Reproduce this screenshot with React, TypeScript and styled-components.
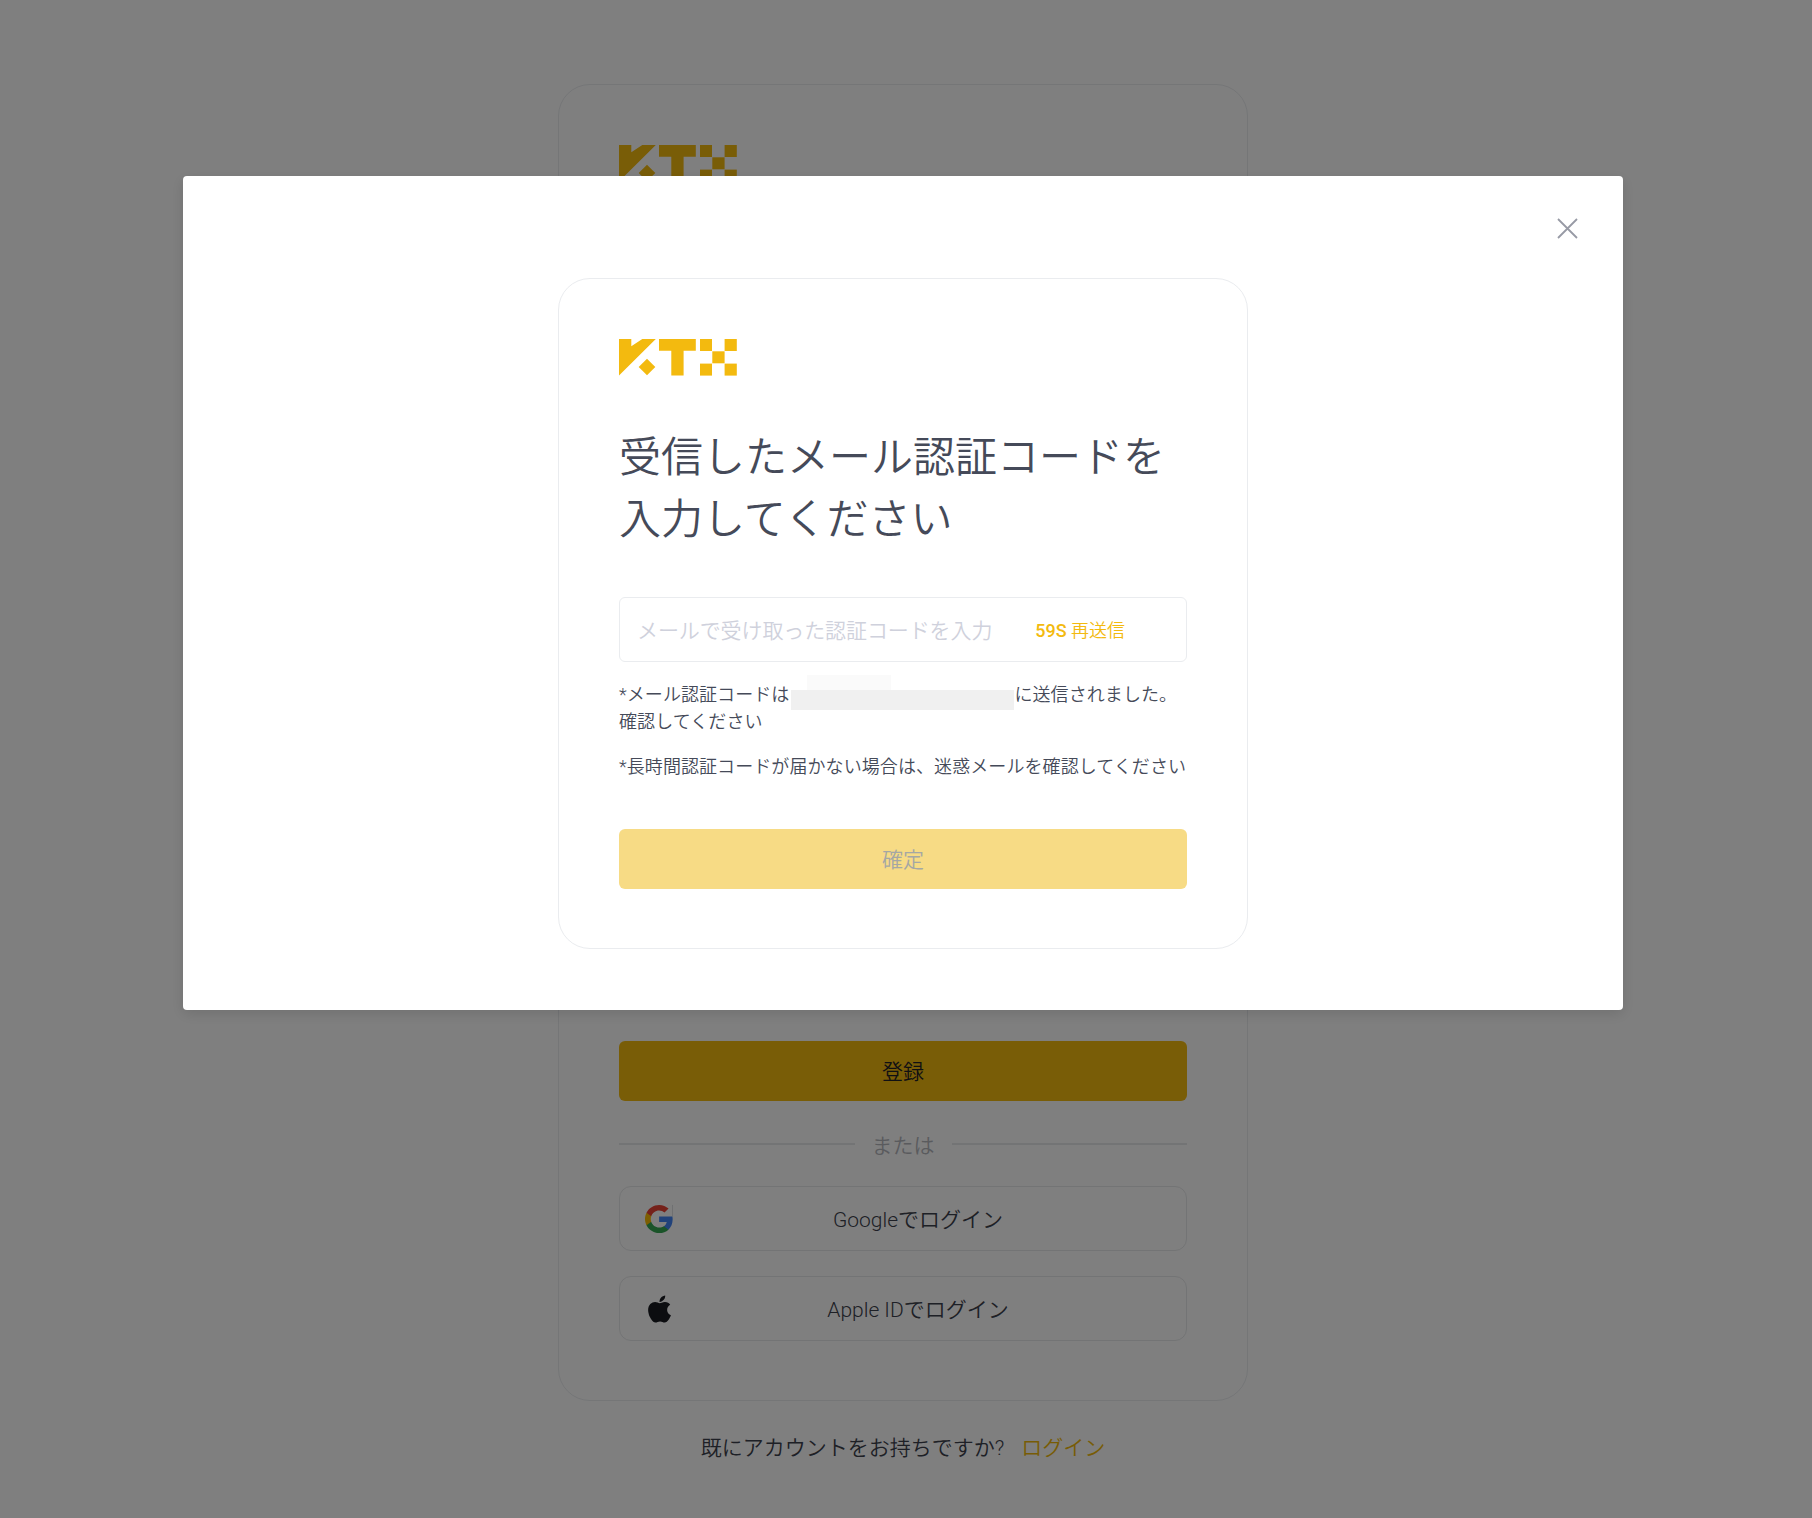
import React from "react";
import styled, { createGlobalStyle } from "styled-components";
import { FaApple } from "react-icons/fa";

const Global = createGlobalStyle`
  html, body { margin: 0; padding: 0; background: #fff; }
  body { font-family: Roboto, "Noto Sans CJK JP", sans-serif; font-weight: 350; }
  * { box-sizing: border-box; }
`;

const Page = styled.div`
  width: 1812px;
  height: 1518px;
  padding: 84px 6px 0 0;
  display: flex;
  flex-direction: column;
  align-items: center;
  overflow: hidden;
`;

const Card = styled.div`
  width: 690px;
  padding: 60px 60px 59px;
  border: 1px solid #eaecef;
  border-radius: 32px;
  background: #fff;
  display: flex;
  flex-direction: column;
`;

const LogoMark = styled.svg`
  display: block;
  width: 118px;
  height: 37px;
  flex: none;
`;

const Logo = () => (
  <LogoMark viewBox="0 0 118 37">
    <g fill="#f3ba0f">
      <polygon points="0,0 12.3,0 12.3,7.2 23.3,0 36.8,0 0,36.5" />
      <polygon points="28,19.8 36.3,28 28,36.3 19.7,28" />
      <polygon points="40,0 76.8,0 76.8,11.8 64.6,11.8 64.6,36.5 52.3,36.5 52.3,11.8 40,11.8" />
      <rect x="81" y="0" width="12" height="12" />
      <rect x="105.6" y="0" width="12.2" height="12" />
      <rect x="93.3" y="12.3" width="12.3" height="12" />
      <rect x="81" y="24.6" width="12" height="12" />
      <rect x="105.6" y="24.6" width="12.2" height="12" />
    </g>
  </LogoMark>
);

const FormSlot = styled.div`
  height: 859px;
  flex: none;
`;

const PrimaryButton = styled.button<{ $disabled?: boolean }>`
  width: 100%;
  height: 60px;
  border: none;
  border-radius: 6px;
  background: ${(p) => (p.$disabled ? "#f7db85" : "#f3ba0f")};
  color: ${(p) => (p.$disabled ? "#a5a7a4" : "#1e2026")};
  font-family: inherit;
  font-weight: 350;
  font-size: 21px;
  padding: 0 0 2px;
  flex: none;
`;

const Divider = styled.div`
  display: flex;
  align-items: center;
  gap: 17px;
  height: 30px;
  margin: 28px 0 27px;
  color: #b4b6bc;
  font-size: 21px;
  padding-bottom: 1px;
  &::before, &::after {
    content: "";
    flex: 1;
    height: 2px;
    background: #e6e8ea;
  }
`;

const SocialButton = styled.div`
  position: relative;
  height: 65px;
  border: 1px solid #e6e8ea;
  border-radius: 12px;
  display: flex;
  align-items: center;
  justify-content: center;
  padding: 0 0 2px 30px;
  color: #3c414c;
  font-size: 21px;
  & + & { margin-top: 25px; }
`;

const SocialIcon = styled.span`
  position: absolute;
  left: 25px;
  top: 50%;
  width: 29px;
  transform: translateY(-50%);
  display: flex;
  justify-content: center;
`;

const GoogleMark = styled.svg`
  width: 29px;
  height: 29px;
  display: block;
`;

const AppleIcon = styled(FaApple)`
  width: 29px;
  height: 31px;
  color: #181a20;
  display: block;
`;

const GoogleIcon = () => (
  <GoogleMark viewBox="1 1 22.6 22">
    <path fill="#4285F4" d="M22.56 12.25c0-.78-.07-1.53-.2-2.25H12v4.26h5.92c-.26 1.37-1.04 2.53-2.21 3.31v2.77h3.57c2.08-1.92 3.28-4.74 3.28-8.09z" />
    <path fill="#34A853" d="M12 23c2.97 0 5.46-.98 7.28-2.66l-3.57-2.77c-.98.66-2.23 1.06-3.71 1.06-2.86 0-5.29-1.93-6.16-4.53H2.18v2.84C3.99 20.53 7.7 23 12 23z" />
    <path fill="#FBBC05" d="M5.84 14.09c-.22-.66-.35-1.36-.35-2.09s.13-1.43.35-2.09V7.07H2.18C1.43 8.55 1 10.22 1 12s.43 3.45 1.18 4.93l3.66-2.84z" />
    <path fill="#EA4335" d="M12 5.38c1.62 0 3.06.56 4.21 1.64l3.15-3.15C17.45 2.09 14.97 1 12 1 7.7 1 3.99 3.47 2.18 7.07l3.66 2.84c.87-2.6 3.3-4.53 6.16-4.53z" />
    <rect x="22.4" y="1" width="0.25" height="9" fill="#9aa0a6" />
  </GoogleMark>
);

const FooterLine = styled.div`
  margin-top: 31px;
  height: 32px;
  line-height: 32px;
  font-size: 21px;
  color: #3c414c;
  display: flex;
  gap: 17px;
`;

const FooterLink = styled.span`
  color: #f0b90b;
`;

const Overlay = styled.div`
  position: fixed;
  inset: 0;
  background: rgba(0, 0, 0, 0.5);
  padding: 176px 6px 0 0;
  display: flex;
  justify-content: center;
  align-items: flex-start;
`;

const Modal = styled.div`
  position: relative;
  width: 1440px;
  height: 834px;
  padding-top: 102px;
  background: #fff;
  border-radius: 4px;
  box-shadow: 0 4px 14px rgba(0, 0, 0, 0.12);
  display: flex;
  justify-content: center;
  align-items: flex-start;
`;

const CloseButton = styled.svg`
  position: absolute;
  top: 42px;
  right: 45px;
  width: 21px;
  height: 21px;
`;

const Title = styled.h1`
  margin: 51px 0 46px;
  font-size: 42px;
  line-height: 62px;
  font-weight: 350;
  color: #454a59;
`;

const InputBox = styled.div`
  height: 65px;
  border: 1px solid #eaecef;
  border-radius: 6px;
  padding: 0 61px 0 17px;
  display: flex;
  align-items: center;
`;

const CodeInput = styled.input`
  flex: 1;
  min-width: 0;
  border: none;
  outline: none;
  background: transparent;
  font-family: inherit;
  font-weight: 350;
  font-size: 21px;
  letter-spacing: -0.1px;
  padding: 2px 0 0;
  color: #474d57;
  &::placeholder { color: #cfd1dc; opacity: 1; }
`;

const Resend = styled.span`
  flex: none;
  font-size: 18px;
  font-weight: 350;
  color: #f3ba0f;
  padding-bottom: 2px;
`;

const ResendCount = styled.span`
  font-weight: 500;
`;

const Note = styled.p`
  margin: 19px 0 0;
  font-size: 18px;
  line-height: 27px;
  letter-spacing: 0.08px;
  color: #454a59;
  & + & { margin-top: 18px; }
`;

const Masked = styled.span`
  position: relative;
  display: inline-block;
  width: 223px;
  height: 20px;
  margin-left: 2px;
  vertical-align: middle;
`;

const MaskBlur = styled.span`
  position: absolute;
  left: 0;
  right: 0;
  top: 4px;
  height: 20px;
  background: #f0f0f0;
  filter: blur(0.6px);
  &::before {
    content: "";
    position: absolute;
    left: 16px;
    top: -15px;
    width: 84px;
    height: 15px;
    background: #fafafa;
  }
`;

const ConfirmRow = styled.div`
  margin-top: 49px;
`;

export default function App() {
  return (
    <>
      <Global />
      <Page>
        <Card>
          <Logo />
          <FormSlot />
          <PrimaryButton>登録</PrimaryButton>
          <Divider>または</Divider>
          <SocialButton>
            <SocialIcon><GoogleIcon /></SocialIcon>
            Googleでログイン
          </SocialButton>
          <SocialButton>
            <SocialIcon><AppleIcon /></SocialIcon>
            Apple IDでログイン
          </SocialButton>
        </Card>
        <FooterLine>
          <span>既にアカウントをお持ちですか?</span>
          <FooterLink>ログイン</FooterLink>
        </FooterLine>
      </Page>
      <Overlay>
        <Modal>
          <CloseButton viewBox="0 0 21 21" fill="none" stroke="#979aa5" strokeWidth="1.8">
            <path d="M1 1 L20 20 M20 1 L1 20" />
          </CloseButton>
          <Card>
            <Logo />
            <Title>受信したメール認証コードを<br />入力してください</Title>
            <InputBox>
              <CodeInput placeholder="メールで受け取った認証コードを入力" />
              <Resend><ResendCount>59S</ResendCount> 再送信</Resend>
            </InputBox>
            <Note>*メール認証コードは<Masked><MaskBlur /></Masked>に送信されました。確認してください</Note>
            <Note>*長時間認証コードが届かない場合は、迷惑メールを確認してください</Note>
            <ConfirmRow>
              <PrimaryButton $disabled>確定</PrimaryButton>
            </ConfirmRow>
          </Card>
        </Modal>
      </Overlay>
    </>
  );
}
